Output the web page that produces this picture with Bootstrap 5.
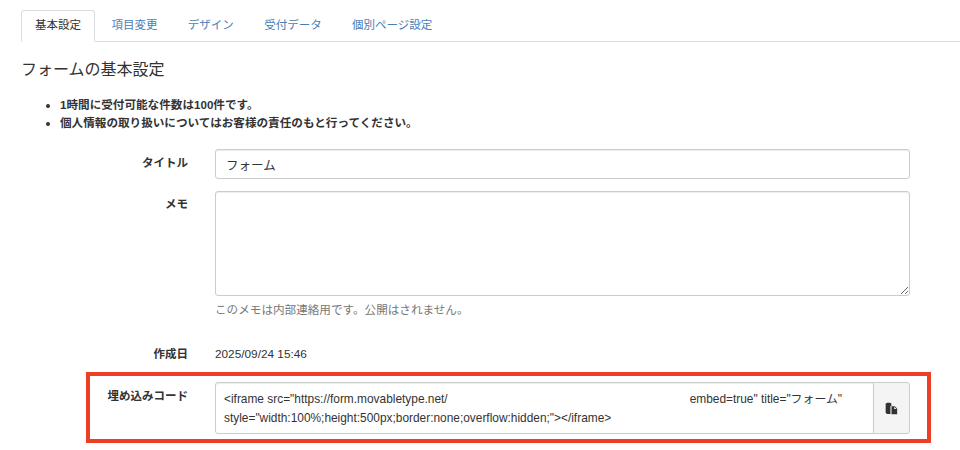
<!DOCTYPE html>
<html lang="ja">
<head>
<meta charset="utf-8">
<title>フォームの基本設定</title>
<link href="https://cdn.jsdelivr.net/npm/bootstrap@5.3.0/dist/css/bootstrap.min.css" rel="stylesheet">
<style>
html,body{height:450px;overflow:hidden}
body{font-family:"Liberation Sans","Noto Sans CJK JP",sans-serif;font-size:12px;color:#333;background:#fff;position:relative}
.shell{padding:10px 0 0 21px}
.nav-tabs{border-bottom:1px solid #ddd;--bs-nav-tabs-border-radius:3px;--bs-nav-tabs-border-color:#ddd;gap:2.4px}
.nav-tabs .nav-link{padding:0 13px;height:32px;line-height:29px;font-size:11.5px;color:#4a7db5;border-color:transparent;margin-bottom:-1px}
.nav-tabs .nav-link.active{color:#333;border-color:#ddd #ddd #fff;background:#fff}
.head-title{font-size:16px;font-weight:400;line-height:22px;margin:17px 0 15px;color:#333}
.notes{font-size:11.6px;font-weight:700;line-height:18px;margin:0 0 17px;padding-left:39px}
.field{display:flex;padding-right:50.5px}
.fname{width:167px;flex:none;text-align:right;font-weight:700;font-size:11.5px;margin-right:27px;padding-top:5px;line-height:18px}
.fbody{flex:1;min-width:0}
.form-control{font-size:12.5px;color:#333;border-color:#ccc;border-radius:3px;box-shadow:inset 0 1px 1px rgba(0,0,0,.075)}
.title-input{height:30px;padding:4px 10px;margin-bottom:12px}
.memo-input{height:105px;display:block;resize:vertical}
.memo-row .fname{padding-top:4px}
.helper{font-size:11.6px;color:#777;line-height:18px;margin:5px 0 0}
.created{margin-top:20px;margin-bottom:19px}
.created .fbody{padding-top:7px;font-size:11.8px;line-height:16px}
.created .fname{padding-top:6px}
.code-box{height:52px;padding:7px 8px 5px;font-size:11.9px;line-height:19px;background:#fff;white-space:nowrap;overflow:hidden}
.blank-run{display:inline-block;width:242px}
.code-btn{width:37px;padding:0;background:#f4f4f4;border:1px solid #ccc;border-radius:0 3px 3px 0;display:flex;align-items:center;justify-content:center}
.redbox{position:absolute;left:86px;top:372px;width:845px;height:71px;border:4px solid #ec3f25;pointer-events:none}
</style>
</head>
<body>
<div class="shell">
  <ul class="nav nav-tabs">
    <li class="nav-item"><a class="nav-link active" href="#">基本設定</a></li>
    <li class="nav-item"><a class="nav-link" href="#">項目変更</a></li>
    <li class="nav-item"><a class="nav-link" href="#">デザイン</a></li>
    <li class="nav-item"><a class="nav-link" href="#">受付データ</a></li>
    <li class="nav-item"><a class="nav-link" href="#">個別ページ設定</a></li>
  </ul>
  <h2 class="head-title">フォームの基本設定</h2>
  <ul class="notes">
    <li>1時間に受付可能な件数は100件です。</li>
    <li>個人情報の取り扱いについてはお客様の責任のもと行ってください。</li>
  </ul>
  <div class="field">
    <label class="fname">タイトル</label>
    <div class="fbody"><input class="form-control title-input" type="text" value="フォーム"></div>
  </div>
  <div class="field memo-row">
    <label class="fname">メモ</label>
    <div class="fbody">
      <textarea class="form-control memo-input"></textarea>
      <p class="helper">このメモは内部連絡用です。公開はされません。</p>
    </div>
  </div>
  <div class="field created">
    <label class="fname">作成日</label>
    <div class="fbody">2025/09/24 15:46</div>
  </div>
  <div class="field code-row">
    <label class="fname">埋め込みコード</label>
    <div class="fbody">
      <div class="input-group">
        <div class="form-control code-box">&lt;iframe src="https://form.movabletype.net/<span class="blank-run"></span>embed=true" title="フォーム"<br>style="width:100%;height:500px;border:none;overflow:hidden;"&gt;&lt;/iframe&gt;</div>
        <button class="btn code-btn" type="button" aria-label="コピー">
          <svg width="13" height="13" viewBox="0 0 12 12" fill="#333"><path d="M.6 1.6 1.8.6h3l1.1 1V3.4L5 4v7H1.8L.6 10z"/><path d="M6 4h3l2.2 2v5.4H6zM8.5 4.4v2h2.2z" fill-rule="evenodd"/></svg>
        </button>
      </div>
    </div>
  </div>
</div>
<div class="redbox"></div>
<script src="https://cdn.jsdelivr.net/npm/bootstrap@5.3.0/dist/js/bootstrap.bundle.min.js"></script>
</body>
</html>
